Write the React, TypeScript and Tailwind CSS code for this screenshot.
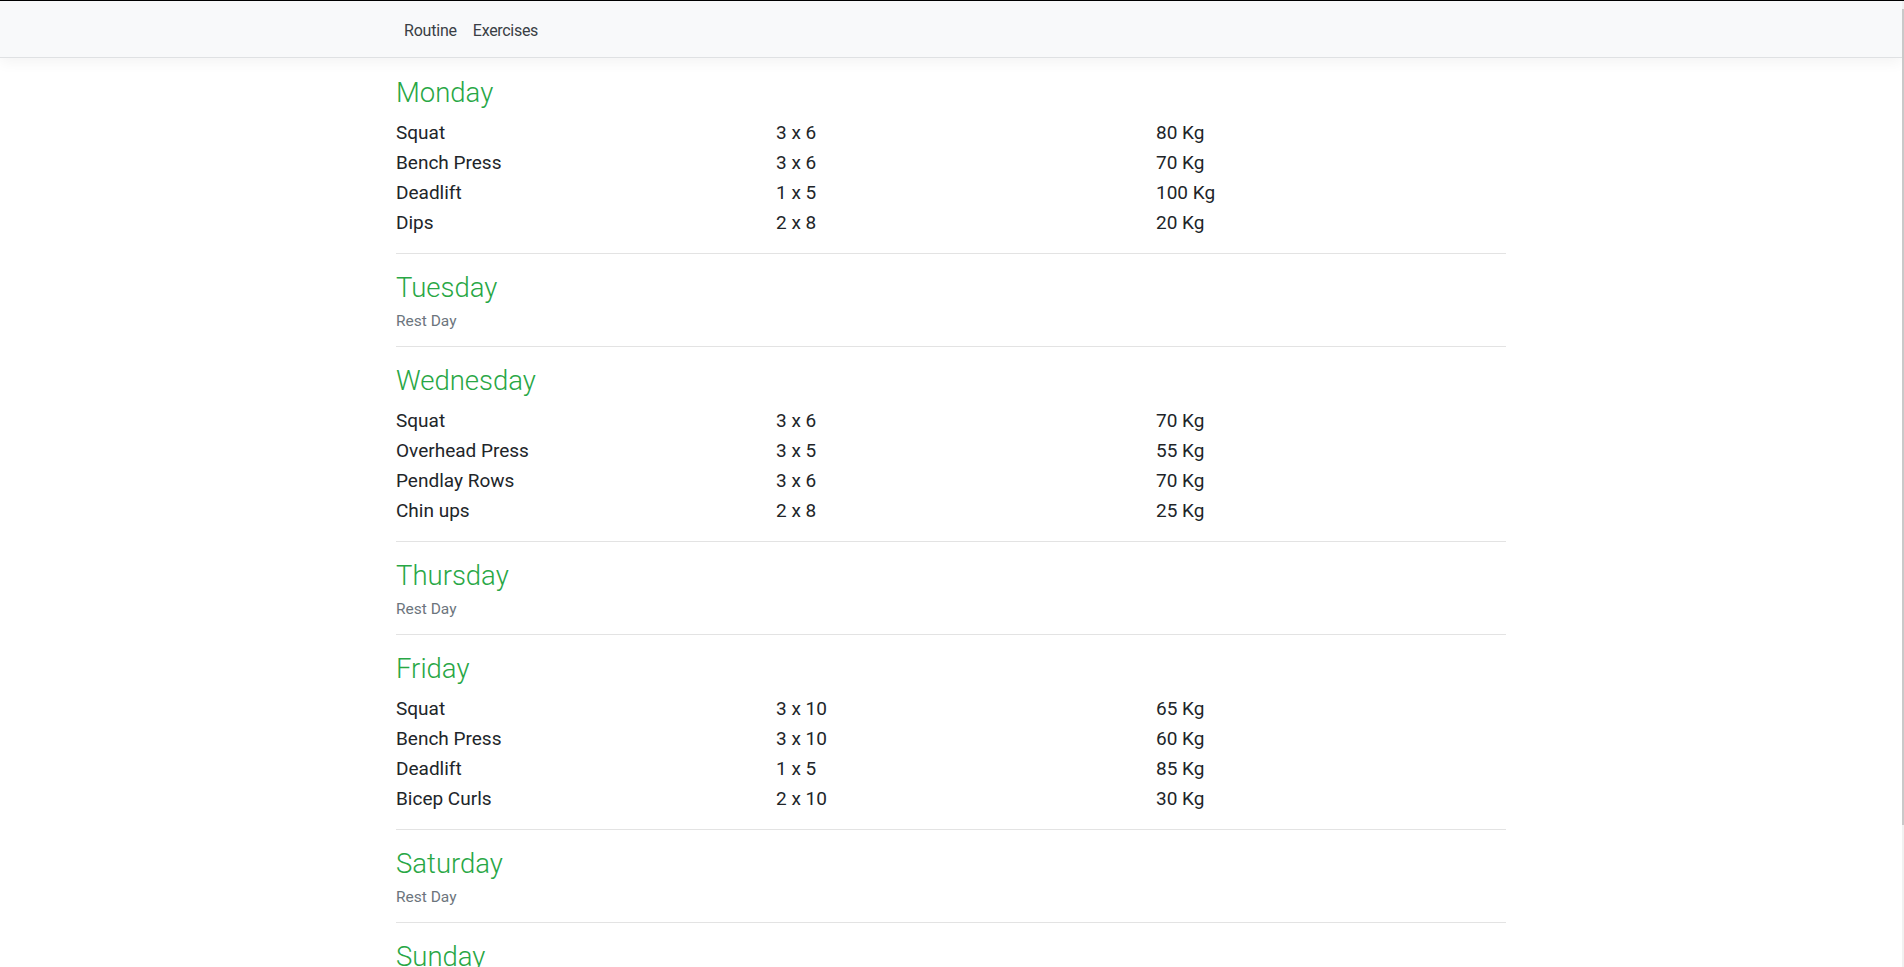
import React from "react";

type Ex = { name: string; sets: string; weight: string };
type Day = { day: string; exercises: Ex[] | null };

const days: Day[] = [
  {
    day: "Monday",
    exercises: [
      { name: "Squat", sets: "3 x 6", weight: "80 Kg" },
      { name: "Bench Press", sets: "3 x 6", weight: "70 Kg" },
      { name: "Deadlift", sets: "1 x 5", weight: "100 Kg" },
      { name: "Dips", sets: "2 x 8", weight: "20 Kg" },
    ],
  },
  { day: "Tuesday", exercises: null },
  {
    day: "Wednesday",
    exercises: [
      { name: "Squat", sets: "3 x 6", weight: "70 Kg" },
      { name: "Overhead Press", sets: "3 x 5", weight: "55 Kg" },
      { name: "Pendlay Rows", sets: "3 x 6", weight: "70 Kg" },
      { name: "Chin ups", sets: "2 x 8", weight: "25 Kg" },
    ],
  },
  { day: "Thursday", exercises: null },
  {
    day: "Friday",
    exercises: [
      { name: "Squat", sets: "3 x 10", weight: "65 Kg" },
      { name: "Bench Press", sets: "3 x 10", weight: "60 Kg" },
      { name: "Deadlift", sets: "1 x 5", weight: "85 Kg" },
      { name: "Bicep Curls", sets: "2 x 10", weight: "30 Kg" },
    ],
  },
  { day: "Saturday", exercises: null },
  { day: "Sunday", exercises: null },
];

export default function App() {
  return (
    <div
      className="flex h-[967px] flex-col overflow-hidden bg-white text-[#212529]"
      style={{ fontFamily: '"Segoe UI", Roboto, "Noto Sans", sans-serif' }}
    >
      <div className="h-px shrink-0 bg-black" />
      <div className="flex min-h-0 flex-1">
        <div className="min-w-0 flex-1 overflow-hidden">
          <nav className="relative z-10 h-[57px] border-b border-[#dfe1e3] bg-[#f8f9fa] shadow-[0_4px_14px_rgba(0,0,0,0.05)]">
            <div className="mx-auto flex h-full w-[1110px] items-center pt-[4px]">
              <a className="px-2 text-[16px] tracking-[-0.2px] text-[#3a3f45]">Routine</a>
              <a className="px-2 text-[16px] tracking-[-0.3px] text-[#3a3f45]">Exercises</a>
            </div>
          </nav>
          <main className="mx-auto w-[1110px] pt-[18px]">
            {days.map((d) => (
              <section key={d.day}>
                <h3 className="text-[27.5px] font-light leading-[34px] text-[#28a745]">{d.day}</h3>
                {d.exercises ? (
                  <>
                    <div className="mt-2">
                      {d.exercises.map((e, i) => (
                        <div key={i} className="grid grid-cols-[380px_380px_1fr] text-[19px] leading-[30px]">
                          <span>{e.name}</span>
                          <span>{e.sets}</span>
                          <span>{e.weight}</span>
                        </div>
                      ))}
                    </div>
                    <hr className="mb-[17px] mt-[15px] border-t border-[#e3e3e3]" />
                  </>
                ) : (
                  <>
                    <p className="mt-1 text-[15.5px] leading-[24px] text-[#6c757d]">Rest Day</p>
                    <hr className="mb-[17px] mt-[13px] border-t border-[#e3e3e3]" />
                  </>
                )}
              </section>
            ))}
          </main>
        </div>
        <div className="flex w-[2px] shrink-0 flex-col bg-[#f1f1f1]">
          <div className="mt-[8px] h-[816px] w-full bg-[#c9c9c9]" />
        </div>
      </div>
    </div>
  );
}
